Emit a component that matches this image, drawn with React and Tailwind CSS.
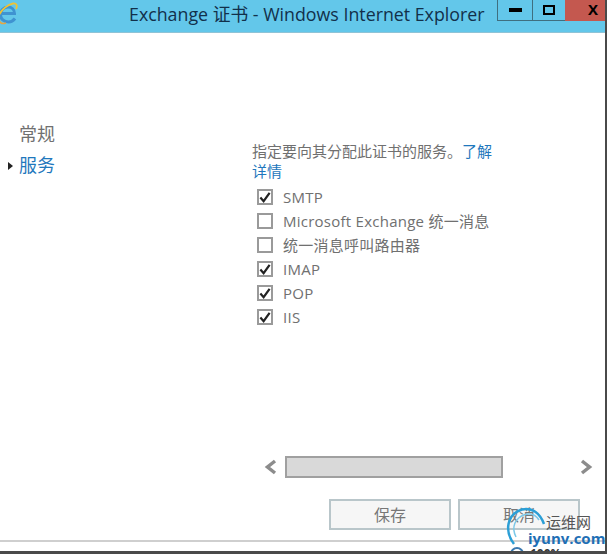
import React from 'react';

const font = { fontFamily: '"Open Sans", "Noto Sans CJK SC", sans-serif' };

const services = [
  { label: 'SMTP', checked: true },
  { label: 'Microsoft Exchange 统一消息', checked: false },
  { label: '统一消息呼叫路由器', checked: false },
  { label: 'IMAP', checked: true },
  { label: 'POP', checked: true },
  { label: 'IIS', checked: true },
];

const IeLogo = () => (
  <svg width="20" height="26" viewBox="0 0 20 26" className="shrink-0">
    {/* the e */}
    <path
      d="M2 13.5 H14.5 C14.5 9.5 11.5 7 8 7 C3.5 7 0.5 10.5 0.5 14.5 C0.5 19 4 22 8.5 22 C11.5 22 13.5 20.5 15 18.5"
      fill="none"
      stroke="#3f93d1"
      strokeWidth="3"
    />
    <path d="M-1 15 C2 9 8 4.5 13 3.5 C17 3 17.5 6 16 9" fill="none" stroke="#efc234" strokeWidth="1.8" />
    <path d="M-1 20 C0 24 3 24 6 23" fill="none" stroke="#e9a53f" strokeWidth="1.6" />
  </svg>
);

const Check = ({ checked }) => (
  <span className="flex h-[16px] w-[16px] shrink-0 items-center justify-center border-2 border-[#9a9a9a] bg-white">
    {checked && (
      <svg width="13" height="13" viewBox="0 0 13 13">
        <path d="M1.5 6.5 L5 10.5 L11.5 1.5" fill="none" stroke="#222" strokeWidth="2.4" />
      </svg>
    )}
  </span>
);

const Chevron = ({ flip }) => (
  <svg width="13" height="16" viewBox="0 0 13 16" className={flip ? 'rotate-180' : ''}>
    <path d="M11 2 L3.5 8 L11 14" fill="none" stroke="#8c8c8c" strokeWidth="3.5" />
  </svg>
);

export default function App() {
  return (
    <div className="relative h-[555px] w-[609px] overflow-hidden bg-white" style={font}>
      <div className="flex h-[554px] w-[607px] flex-col border-r-2 border-b-[3px] border-[#4a4a4a] bg-white">
        {/* title bar */}
        <div className="flex h-[33px] shrink-0 items-start justify-between border-b border-[#8fc3d6] bg-[#63c7ea]">
          <IeLogo />
          <div className="ml-[109px] whitespace-nowrap text-[17.8px] leading-[28px] text-[#12304a]">
            Exchange 证书 - Windows Internet Explorer
          </div>
          <div className="ml-auto flex h-[21px]">
            <div className="flex w-[35px] items-center justify-center border-b border-l border-[#3f6f80]">
              <span className="h-[4px] w-[13px] bg-black" />
            </div>
            <div className="flex w-[33px] items-center justify-center border-b border-l border-[#3f6f80]">
              <span className="h-[10px] w-[12px] border-2 border-black" />
            </div>
            <div className="flex w-[40px] items-center justify-center bg-[#c4584f] pb-[2px] pl-[16px] text-[15px] font-bold leading-none text-black">
              X
            </div>
          </div>
        </div>

        <div className="flex min-h-0 flex-1">
          {/* left nav */}
          <div className="w-[252px] shrink-0 pt-[86px] text-[18px] leading-[31px]">
            <div className="pl-[19px] text-[#707070]">常规</div>
            <div className="flex items-center pl-[8px] text-[#1f78bd]">
              <span className="mr-[6px] h-0 w-0 border-y-[4px] border-l-[5px] border-y-transparent border-l-[#222]" />
              服务
            </div>
          </div>

          {/* right panel */}
          <div className="flex min-w-0 flex-1 flex-col">
            <div className="w-[245px] pt-[108px] text-[15px] leading-[20px] text-[#707070]">
              指定要向其分配此证书的服务。<span className="text-[#1f78bd]">了解详情</span>
            </div>
            <div className="mt-[4px] flex flex-col">
              {services.map((s) => (
                <div key={s.label} className="flex h-[24px] items-center pl-[5px] text-[15px] tracking-[0.25px] text-[#707070]">
                  <Check checked={s.checked} />
                  <span className="ml-[10px] whitespace-nowrap">{s.label}</span>
                </div>
              ))}
            </div>

            <div className="mt-[127px] flex h-[22px] items-center">
              <span className="ml-[12px] flex"><Chevron /></span>
              <div className="ml-[8px] h-[22px] w-[218px] border-2 border-[#a0a0a0] bg-[#d9d9d9]" />
              <span className="ml-[77px] flex"><Chevron flip /></span>
            </div>

            <div className="mt-[21px] flex gap-[7px] pl-[77px]">
              <div className="flex h-[31px] w-[122px] items-center justify-center border-2 border-[#b9c6ca] bg-[#f6f6f6] text-[16px] text-[#777777]">
                保存
              </div>
              <div className="flex h-[31px] w-[122px] items-center justify-center border-2 border-[#b9c6ca] bg-[#f6f6f6] text-[16px] text-[#777777]">
                取消
              </div>
            </div>
          </div>
        </div>

        {/* status bar */}
        <div className="flex h-[11px] shrink-0 items-start overflow-hidden border-t-2 border-[#cfcfcf] pl-[510px]">
          <span className="mt-[5px] h-[14px] w-[14px] shrink-0 rounded-full border-2 border-[#3a78b0]" />
          <span className="ml-[6px] mt-[5px] text-[12px] font-bold leading-[14px] text-[#333]">100%</span>
        </div>
      </div>

      {/* watermark */}
      <div className="absolute left-[505px] top-[505px] h-[44px] w-[104px]">
        <svg width="50" height="44" viewBox="0 0 50 44" className="absolute left-0 top-0">
          <path d="M9 39 C-1 26 2 9 17 4.5 C27 2 35 8 39 19" fill="none" stroke="#2c9fd6" strokeWidth="2.5" />
          <path d="M11 32 C6 22 10 13 20 9.5 C26 8 31 10 34 15" fill="none" stroke="#7cc8e8" strokeWidth="1.5" />
        </svg>
        <span className="absolute left-[41px] top-[7px] whitespace-nowrap text-[15px] leading-[20px] text-[#555]">运维网</span>
        <span className="absolute left-[23px] top-[23px] whitespace-nowrap text-[15px] font-bold leading-[20px] text-[#1f6fb5]">iyunv.com</span>
      </div>
    </div>
  );
}
